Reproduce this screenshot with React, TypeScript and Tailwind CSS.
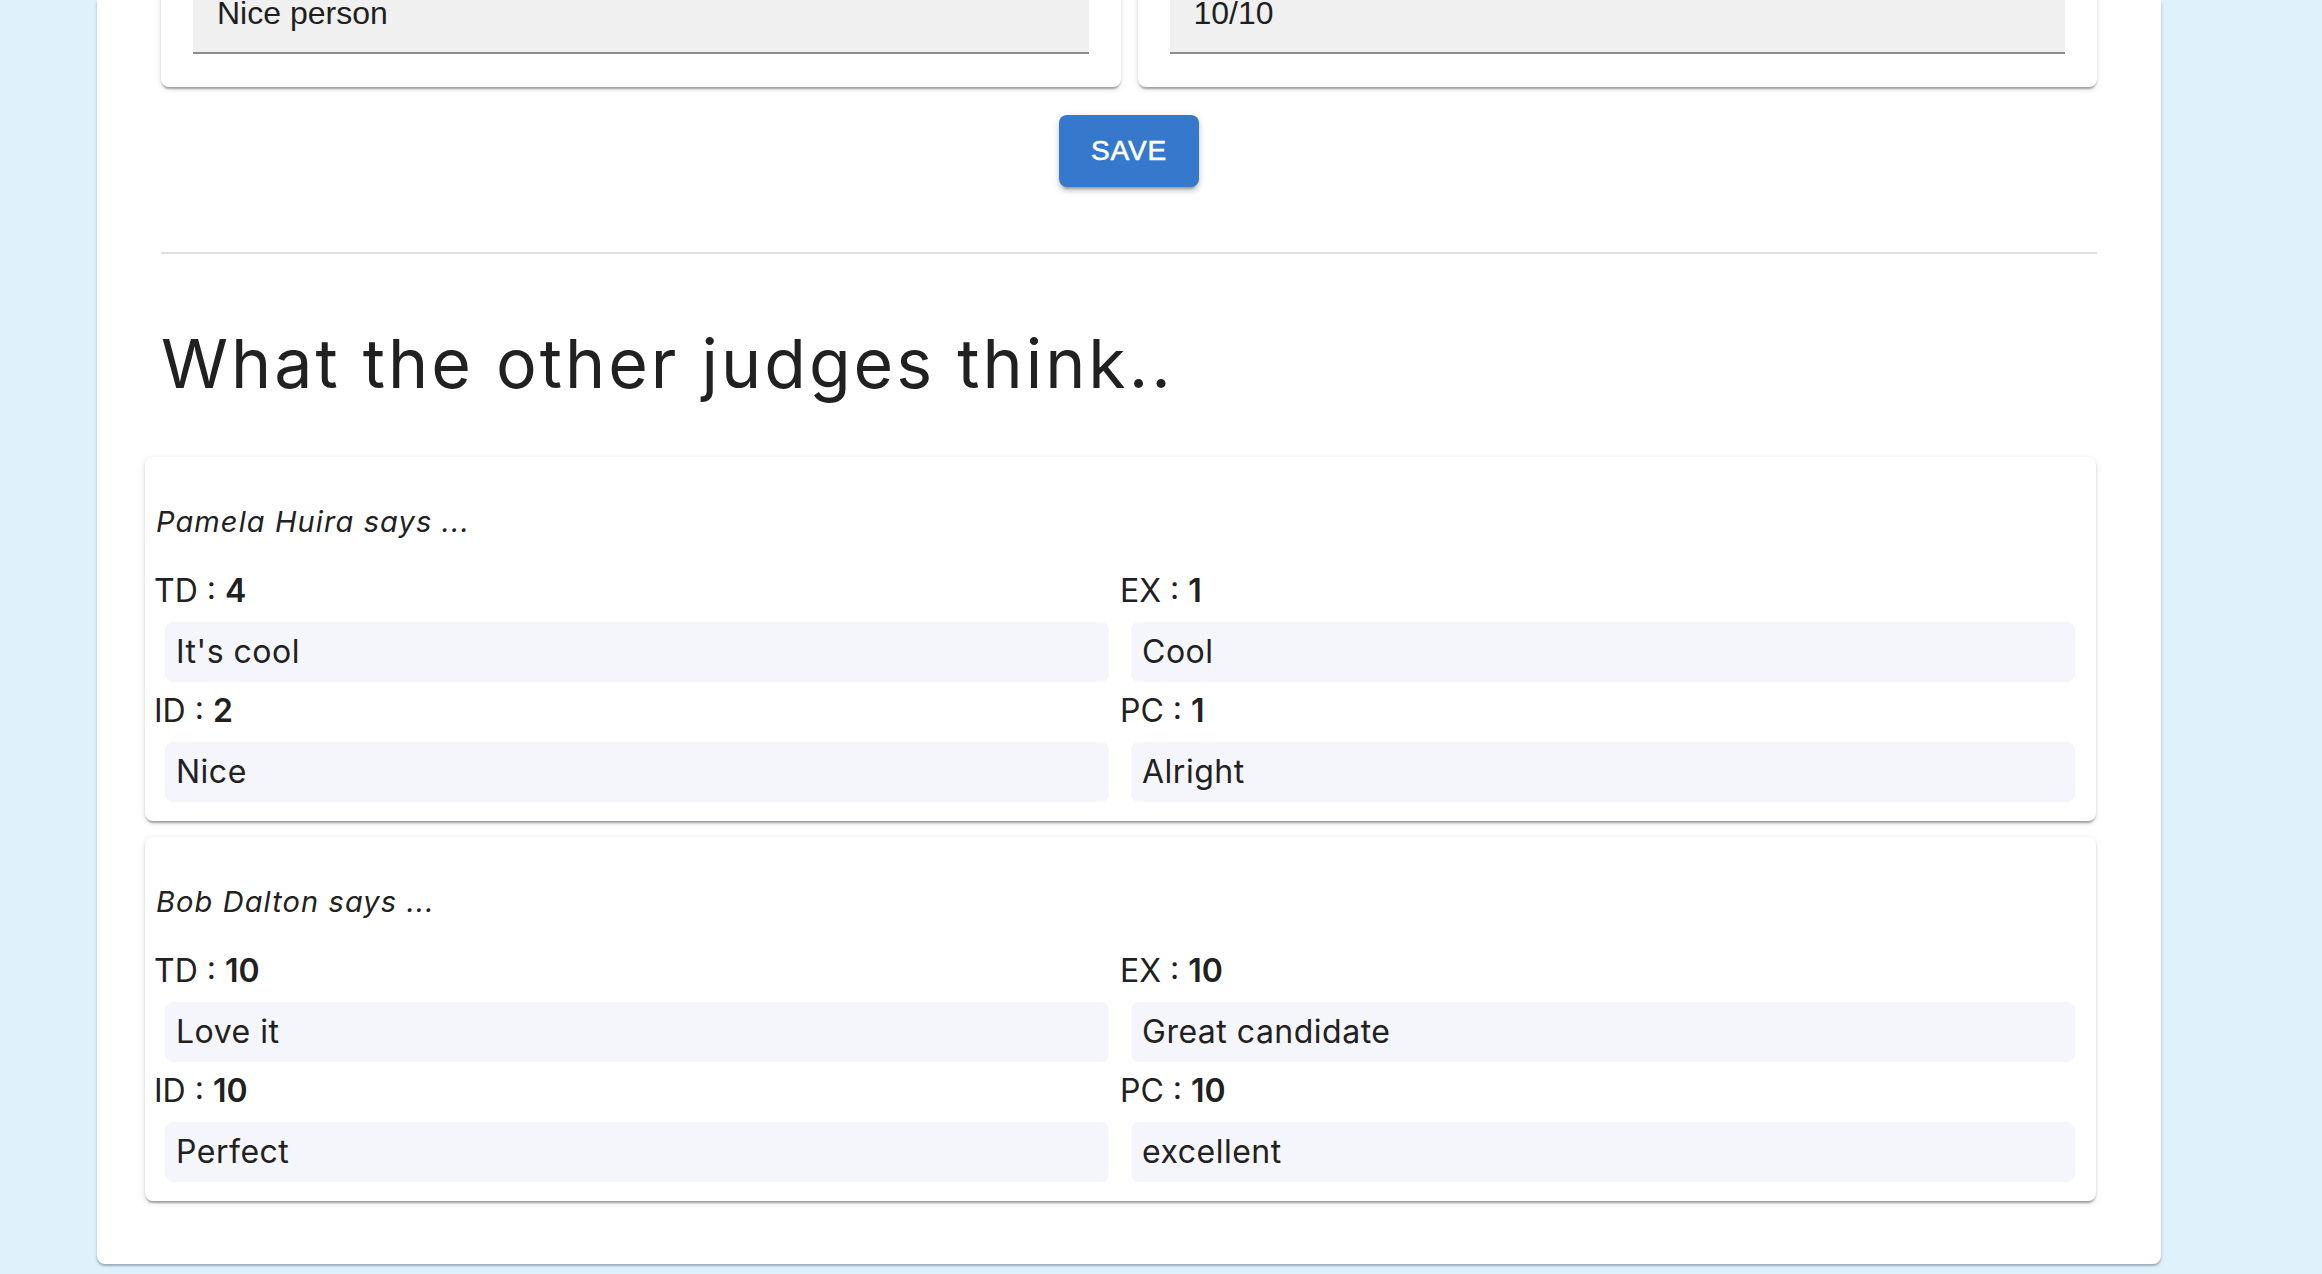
import React from "react";

type Score = { label: string; value: string; comment: string };
type Judge = { name: string; scores: Score[] };

const judges: Judge[] = [
  {
    name: "Pamela Huira",
    scores: [
      { label: "TD", value: "4", comment: "It's cool" },
      { label: "EX", value: "1", comment: "Cool" },
      { label: "ID", value: "2", comment: "Nice" },
      { label: "PC", value: "1", comment: "Alright" },
    ],
  },
  {
    name: "Bob Dalton",
    scores: [
      { label: "TD", value: "10", comment: "Love it" },
      { label: "EX", value: "10", comment: "Great candidate" },
      { label: "ID", value: "10", comment: "Perfect" },
      { label: "PC", value: "10", comment: "excellent" },
    ],
  },
];

const cardShadow =
  "shadow-[0_4px_2px_-2px_rgba(0,0,0,0.2),0_2px_2px_0_rgba(0,0,0,0.14),0_2px_6px_0_rgba(0,0,0,0.12)]";

function TopField({ value }: { value: string }) {
  return (
    <div className={`bg-white rounded-[8px] ${cardShadow} pt-[32px] px-[32px] pb-[33px]`}>
      <div className="h-[82px] bg-[#f0f0f0] rounded-t-[8px] border-b-2 border-[#8c8c8c] pl-[24px] pt-[22px]">
        <div className="font-['Liberation_Sans',Arial,sans-serif] text-[32px] leading-[38px] text-[#1f1f1f]">
          {value}
        </div>
      </div>
    </div>
  );
}

function JudgeCard({ judge }: { judge: Judge }) {
  return (
    <div className={`w-[1951px] -ml-[16px] bg-white rounded-[8px] ${cardShadow} pt-[46px] pb-[19px] pl-[11px] pr-[8px]`}>
      <div className="italic text-[29px] leading-[38px] tracking-[1.1px]">{judge.name} says ...</div>
      <div className="mt-[30px] grid grid-cols-2 gap-y-[9px]">
        {judge.scores.map((s) => (
          <div key={s.label} className="flex flex-col">
            <div className="h-[40px] text-[32px] leading-[40px] -ml-[2px]">
              {s.label} : <span className="font-semibold">{s.value}</span>
            </div>
            <div className="mt-[11px] ml-[9px] mr-[13px] h-[60px] rounded-[8px] bg-[#f5f6fb] pl-[11px] flex items-center text-[32px] leading-[40px] tracking-[0.5px]">
              {s.comment}
            </div>
          </div>
        ))}
      </div>
    </div>
  );
}

export default function App() {
  return (
    <div className="h-[1274px] w-full overflow-hidden bg-[#dff2fc] font-['Inter',sans-serif] text-[#212121]">
      <div className="ml-[97px] w-[2064px] h-[1264px] bg-white rounded-b-[8px] shadow-[0_2px_2px_rgba(40,70,90,0.35),0_1px_6px_rgba(0,0,0,0.08)] px-[64px] flex flex-col">
        <div className="-mt-[60px] grid grid-cols-2 gap-[17px]">
          <TopField value="Nice person" />
          <TopField value="10/10" />
        </div>
        <div className="mt-[28px] flex justify-center">
          <button className="w-[140px] h-[72px] rounded-[8px] bg-[#3578cc] text-white font-['Liberation_Sans',Arial,sans-serif] font-medium text-[28px] tracking-[0.8px] [-webkit-text-stroke:0.6px_white] shadow-[0_6px_2px_-4px_rgba(0,0,0,0.2),0_4px_4px_0_rgba(0,0,0,0.14),0_2px_10px_0_rgba(0,0,0,0.12)]">
            SAVE
          </button>
        </div>
        <div className="mt-[65px] h-[2px] bg-[#e0e0e0]" />
        <h4 className="mt-[67px] text-[68px] leading-[84px] font-normal tracking-[3px]">What the other judges think..</h4>
        <div className="mt-[52px] flex flex-col gap-[16px]">
          {judges.map((j) => (
            <JudgeCard key={j.name} judge={j} />
          ))}
        </div>
      </div>
    </div>
  );
}
